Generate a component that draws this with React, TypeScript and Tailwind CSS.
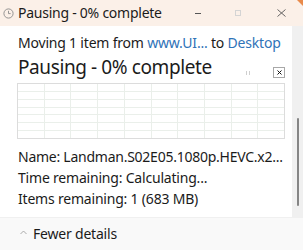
import React from "react";

export default function App() {
  const cols = Array.from({ length: 9 });
  const rows = Array.from({ length: 6 });
  return (
    <div
      className="relative w-[303px] h-[250px] overflow-hidden bg-white text-[#1b1b1b]"
      style={{ fontFamily: '"Noto Sans", sans-serif' }}
    >
      {/* title bar */}
      <div className="relative flex h-[26px] items-center bg-[#fbf0e8]">
        <svg width="11" height="11" viewBox="0 0 11 11" className="ml-[3px] mt-[1px]">
          <circle cx="5.5" cy="5.5" r="4.6" fill="none" stroke="#8a8a8a" strokeWidth="0.9" />
          <path d="M5.5 2.8 V5.6 H7.6" fill="none" stroke="#8a8a8a" strokeWidth="0.9" />
        </svg>
        <span className="ml-[4px] text-[14px] leading-[20px] tracking-[-0.25px]">Pausing - 0% complete</span>
        <div className="ml-auto flex items-center">
          <div className="h-px w-[6px] bg-[#555]" />
          <div className="ml-[34px] h-[6px] w-[6px] border border-[#d4d4d4]" />
          <svg width="9" height="8" viewBox="0 0 9 8" className="ml-[36px] mr-[17px]">
            <path d="M0.5 0.5 L8.5 7.5 M8.5 0.5 L0.5 7.5" stroke="#555" strokeWidth="0.9" />
          </svg>
        </div>
        <div className="absolute right-0 top-0 h-0 w-0 border-l-[6px] border-t-[6px] border-l-transparent border-t-[#e98a4a]" />
      </div>

      {/* main */}
      <div className="flex h-[191px]">
        <div className="flex w-[292px] flex-col bg-white pl-[17px]">
          <div className="mt-[7px] pl-[1px] text-[14px] leading-[20px] tracking-[-0.2px]">
            Moving 1 item from <span className="text-[#2f73b8]">www.UI...</span> to{" "}
            <span className="text-[#2f73b8]">Desktop</span>
          </div>
          <div className="mt-[1px] flex w-[268px] items-end justify-between">
            <div className="pl-[1px] text-[19px] leading-[26px] tracking-[-0.4px]">Pausing - 0% complete</div>
            <div className="mb-[2px] flex items-center">
              <div className="mr-[23px] flex gap-[2px]">
                <div className="h-[4px] w-px bg-[#cfcfcf]" />
                <div className="h-[4px] w-px bg-[#cfcfcf]" />
              </div>
              <div className="flex h-[11px] w-[12px] items-center justify-center border border-[#a8a8a8] bg-white">
                <svg width="5" height="5" viewBox="0 0 5 5">
                  <path d="M0.5 0.5 L4.5 4.5 M4.5 0.5 L0.5 4.5" stroke="#111" strokeWidth="1" />
                </svg>
              </div>
            </div>
          </div>
          <div className="mt-[3px] flex h-[56px] w-[268px] flex-col border border-[#dcdcdc]">
            <div className="relative flex-1">
              <div className="absolute inset-0 flex">
                {cols.map((_, i) => (
                  <div key={i} className="flex-1 border-r border-[#eaefea]" />
                ))}
                <div className="flex-1" />
              </div>
              <div className="absolute inset-0 flex flex-col">
                {rows.map((_, i) => (
                  <div key={i} className="flex-1 border-b border-[#eaefea]" />
                ))}
                <div className="flex-1" />
              </div>
            </div>
          </div>
          <div className="mt-[7px] pl-[1px] text-[14px] leading-[21px] tracking-[-0.25px]">
            Name: Landman.S02E05.1080p.HEVC.x2...
          </div>
          <div className="pl-[1px] text-[14px] leading-[21px] tracking-[-0.2px]">Time remaining: Calculating...</div>
          <div className="pl-[1px] text-[14px] leading-[21px] tracking-[-0.2px]">Items remaining: 1 (683 MB)</div>
        </div>
        <div className="relative w-[11px] bg-[#f0f0f0]">
          <div className="absolute left-[5px] top-[92px] h-[88px] w-[2px] rounded-full bg-[#858585]" />
        </div>
      </div>

      {/* bottom */}
      <div className="flex h-[33px] items-center border-t border-[#f0f0f0] bg-[#f9f9f9]">
        <svg width="7" height="5" viewBox="0 0 7 5" className="ml-[20px] mb-[4px]">
          <path d="M0.5 4 L3.5 1 L6.5 4" fill="none" stroke="#a0a0a0" strokeWidth="0.9" />
        </svg>
        <span className="ml-[6px] text-[14px] leading-[20px] tracking-[-0.2px]">Fewer details</span>
      </div>
    </div>
  );
}
